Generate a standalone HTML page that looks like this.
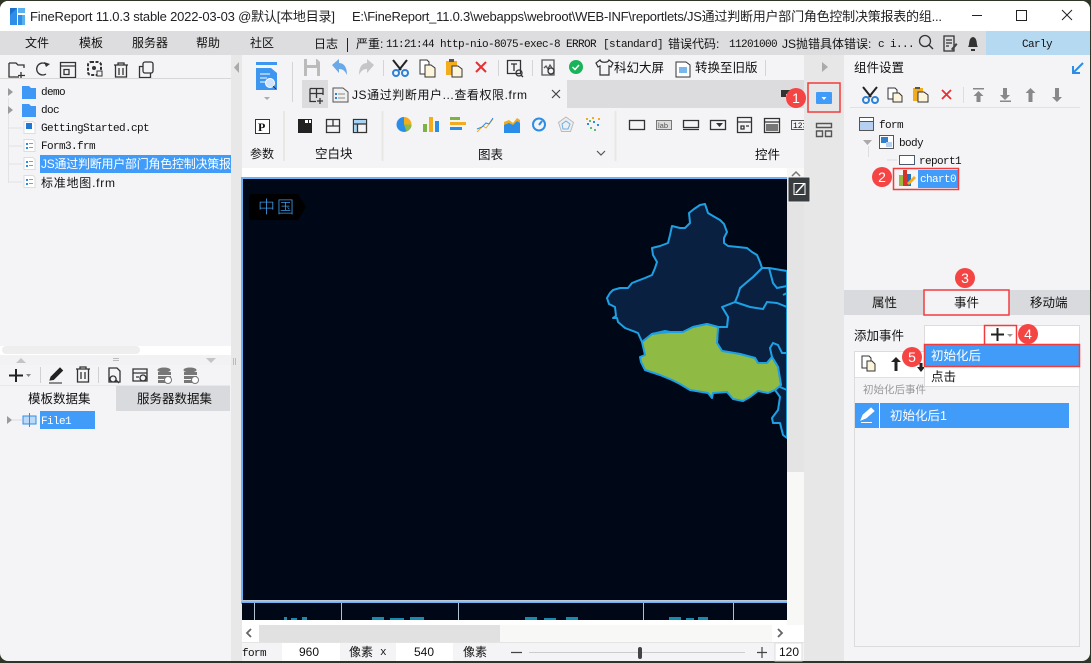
<!DOCTYPE html>
<html lang="zh"><head><meta charset="utf-8"><title>FineReport</title>
<style>
html,body{margin:0;padding:0;width:1091px;height:663px;overflow:hidden;background:#2f3527}
svg{display:block;position:absolute;left:0;top:0}
text{font-family:"Liberation Sans","Noto Sans CJK SC",sans-serif;font-size:12px;fill:#111}
.m{font-family:"Liberation Mono","Noto Sans CJK SC",monospace;font-size:11px;letter-spacing:-.6px;fill:#111}
.t{font-size:13px;fill:#222}
.w{fill:#fff}
.i{fill:none;stroke:#333;stroke-width:1.3}
</style></head><body>
<svg width="1091" height="663" viewBox="0 0 1091 663" xmlns="http://www.w3.org/2000/svg" shape-rendering="auto">
<rect x="0" y="1" width="1090" height="660" rx="8" fill="#f4f4f7"/>
<path d="M0 31V9a8 8 0 0 1 8-8H1082a8 8 0 0 1 8 8V31Z" fill="#fff"/>
<!-- title -->
<path d="M10 8h7v17h-7zM18 15h5v10h-5z" fill="#2d8fe8"/><path d="M18 8h7v5h-7zM22 15h3v10h-3z" fill="#5ab0ee"/><path d="M10 8l7 0-7 7z" fill="#1a70c8"/>
<text x="30" y="21" class="t" textLength="305">FineReport 11.0.3 stable 2022-03-03 @默认[本地目录]</text>
<text x="352" y="21" class="t" textLength="590">E:\FineReport_11.0.3\webapps\webroot\WEB-INF\reportlets/JS通过判断用户部门角色控制决策报表的组...</text>
<path d="M972 15.500h10" stroke="#222" fill="none"/><rect x="1016.500" y="10.500" width="10" height="10" fill="none" stroke="#222"/><path d="M1062 10l10 10M1072 10l-10 10" stroke="#222" fill="none"/>
<!-- menu -->
<rect x="0" y="31" width="986" height="24" fill="#dddddf"/><rect x="986" y="31" width="104" height="24" fill="#b5d9f0"/>
<text x="25" y="47">文件</text><text x="79" y="47">模板</text><text x="132" y="47">服务器</text><text x="196" y="47">帮助</text><text x="250" y="47">社区</text>
<text x="314" y="48">日志</text><path d="M347.500 38v14" stroke="#222"/><text x="356" y="48">严重:</text>
<text x="386" y="47" class="m">11:21:44</text><text x="440" y="47" class="m">http-nio-8075-exec-8</text><text x="566" y="47" class="m">ERROR</text><text x="603" y="47" class="m">[standard]</text>
<text x="668" y="48">错误代码:</text><text x="729" y="47" class="m">11201000</text><text x="782" y="48">JS抛错具体错误:</text><text x="878" y="47" class="m">c i...</text>
<circle cx="925" cy="41" r="5.500" class="i"/><path d="M929 45l4 4" class="i"/>
<path d="M944 36h10v15h-10zM946 40h6M946 43h6M946 46h3" class="i"/><path d="M951 49l5-6 1.500 1.500-5 6z" fill="#444"/>
<path d="M968 47c2-2 0-9 5-10 5 1 3 8 5 10zM971 49h4v2h-4z" fill="#333"/>
<text x="1022" y="47" class="m">Carly</text>
<!-- left panel -->
<path d="M9 63h7l2 2h6v3M9 63v14h10M21 72v7M18 75.500h7" class="i"/>
<path d="M48 63a6 6 0 1 0 0 10" class="i" transform="translate(-2 1)"/><path d="M44 62l6 2-4 3z" fill="#333"/>
<path d="M60.500 62.500h15v15h-15zM60.500 66h15M64 69.500h5v5h-5z" class="i"/>
<rect x="88" y="62" width="13" height="13" rx="3" fill="none" stroke="#333" stroke-width="2" stroke-dasharray="3 1.500"/><circle cx="94" cy="68" r="2" fill="#333"/><rect x="97" y="71" width="5" height="5" fill="#f4f4f7" stroke="#333"/>
<path d="M114 65h14M118 65v-2h6v2M115.500 65v12h11V65M119 68v7M123 68v7" class="i"/>
<path d="M139.500 66.500h11v11h-11z" class="i"/><rect x="143" y="62" width="10" height="11" rx="2" fill="#f4f4f7" stroke="#333" stroke-width="1.300"/>
<path d="M0 78.500h231" stroke="#d6d6d6"/>
<path d="M8.500 98v85M9 128h13M9 146h13M9 164h13M9 182h13" stroke="#e2e2e4" fill="none"/>
<path d="M8 88l5 4-5 4zM8 106l5 4-5 4z" fill="#9a9a9a"/>
<path d="M22 86h7l2 2h5v11H22zM22 104h7l2 2h5v11H22z" fill="#3f98f5"/>
<g fill="#fff" stroke="#ddd"><path d="M24 121.500h9l2 2v10H24zM24 139.500h9l2 2v10H24zM24 157.500h9l2 2v10H24zM24 175.500h9l2 2v10H24z"/></g>
<path d="M26 123h6v6h-6z" fill="#2079d0"/><path d="M26 143h2v2h-2zM26 147h2v2h-2zM26 161h2v2h-2zM26 165h2v2h-2zM26 179h2v2h-2zM26 183h2v2h-2z" fill="#2b8de6"/><path d="M29 143.500h4M29 147.500h4M29 161.500h4M29 165.500h4M29 179.500h4M29 183.500h4" stroke="#999"/>
<text x="41" y="95" class="m">demo</text><text x="41" y="113" class="m">doc</text><text x="41" y="131" class="m">GettingStarted.cpt</text><text x="41" y="149" class="m">Form3.frm</text>
<rect x="40" y="155" width="191" height="18" fill="#409cf8"/>
<text x="41" y="168" class="w" textLength="190">JS通过判断用户部门角色控制决策报</text>
<text x="41" y="187" textLength="74">标准地图.frm</text>
<rect x="0" y="346" width="231" height="9" fill="#fff"/><rect x="2" y="346" width="138" height="8" rx="4" fill="#eeeeee"/>
<rect x="0" y="355" width="231" height="10" fill="#f2f2f4"/><path d="M16 363l5-5 5 5zM206 358h10l-5 5z" fill="#c4c4c4"/><path d="M113 358.500h6M113 360.500h6" stroke="#bbb"/>
<path d="M9 375.500h14M16 369v13" stroke="#222" stroke-width="2"/><path d="M26 374h5l-2.500 3z" fill="#888"/>
<path d="M40.500 367v16M98.500 367v16" stroke="#d0d0d0"/>
<path d="M50 380l1-3 9-9 2.500 2.500-9 9zM49 383h13" stroke="#222" fill="#222"/>
<path d="M76 369h14M80 369v-2h6v2M77.500 369v13h11V369M81 372v7M85 372v7" class="i"/>
<path d="M109 368h8l3 3v11h-11zM113 376a3 3 0 1 0 .1 0M116 380l3 3" class="i"/>
<path d="M133 369h14v12h-14zM133 373h14M136 377h3" class="i"/><circle cx="143" cy="378" r="3" class="i"/>
<g fill="#777"><ellipse cx="164" cy="370" rx="6.500" ry="2.500"/><rect x="158" y="372" width="13" height="3"/><rect x="158" y="376" width="13" height="3"/><rect x="158" y="380" width="10" height="3"/><ellipse cx="190" cy="370" rx="6.500" ry="2.500"/><rect x="184" y="372" width="13" height="3"/><rect x="184" y="376" width="13" height="3"/><rect x="184" y="380" width="10" height="3"/></g>
<circle cx="168" cy="380" r="3.500" fill="#fff" stroke="#777"/><circle cx="195" cy="380" r="3.500" fill="#fff" stroke="#777"/>
<rect x="0" y="385" width="230" height="1" fill="#e8e8e8"/>
<rect x="116" y="386" width="114" height="25" fill="#d9dadd"/>
<text x="28" y="403" style="font-size:12.500px">模板数据集</text><text x="137" y="403" style="font-size:12.500px">服务器数据集</text>
<path d="M7 416l5 4-5 4z" fill="#9a9a9a"/><path d="M12 420h10" stroke="#ddd"/>
<path d="M23 416h13v8H23zM29.500 413v14" fill="#bcd9f8" stroke="#2f8ce8"/><rect x="40" y="411" width="55" height="18" fill="#409cf8"/><text x="41" y="424" class="m w">File1</text>
<!-- vertical divider -->
<rect x="231" y="55" width="11" height="606" fill="#e8e8e8"/><path d="M239 62v11l-5-5.500z" fill="#aaa"/><path d="M233.500 358v7M235.500 358v7" stroke="#bbb"/>
<!-- top toolbar -->
<rect x="242" y="55" width="562" height="113" fill="#f4f4f7"/>
<rect x="256" y="62" width="21" height="3" fill="#3d96f0"/><path d="M256 68h15l6 5v17h-21z" fill="#3d96f0"/><path d="M260 74h10M260 78h7M260 82h6" stroke="#fff"/><circle cx="270" cy="83" r="4.500" fill="#cfe4fa" stroke="#fff"/><path d="M273 86l3 3" stroke="#333"/><path d="M264 97h6l-3 3z" fill="#aaa"/>
<path d="M292.500 62v40M383.500 60v16M498.500 60v16M532.500 60v16M765.500 60v16" stroke="#d4d4d4"/>
<path d="M304 59h13l3 3v14h-16z" fill="#bbb"/><rect x="307" y="59" width="9" height="6" fill="#f4f4f7"/><rect x="307" y="68" width="10" height="8" fill="#f4f4f7"/>
<path d="M332 65l7-6v4c5 0 8 4 8 12-2-4-4-6-8-6v4z" fill="#6aa8e8"/><path d="M374 65l-7-6v4c-5 0-8 4-8 12 2-4 4-6 8-6v4z" fill="#c6c6c6"/>
<g><path d="M393 60l8 10M407 60l-8 10" stroke="#222" stroke-width="2"/><circle cx="396" cy="73" r="3" fill="none" stroke="#2b80d8" stroke-width="2"/><circle cx="405" cy="73" r="3" fill="none" stroke="#2b80d8" stroke-width="2"/></g>
<path d="M420 60h7l2 2v12h-9z" fill="#fff" stroke="#333"/><path d="M425 65h6l4 3v9h-10z" fill="#fdf4dc" stroke="#333"/>
<rect x="446" y="61" width="11" height="14" fill="#f2ac1e"/><rect x="449" y="59" width="5" height="3" fill="#555"/><path d="M452 66h6l4 3v8h-10z" fill="#fdf4dc" stroke="#333"/>
<path d="M476 62l10 10M486 62l-10 10" stroke="#e83030" stroke-width="2"/>
<path d="M507.500 60.500h13v13h-13zM511 64h6M514 64v7" class="i"/><circle cx="519" cy="73" r="3" class="i"/><path d="M521 75l2 2" class="i"/>
<path d="M542 60h12v15h-12zM544 68l2-2 2 3 2-4 2 3" class="i" style="stroke:#555"/><circle cx="551" cy="71" r="3" class="i"/>
<circle cx="576" cy="67" r="7" fill="#19b35a"/><path d="M572.500 67l2.500 2.500 4-4.500" stroke="#fff" stroke-width="1.500" fill="none"/>
<path d="M600 60l-4 3 2 4 2-1v9h9v-9l2 1 2-4-4-3c-1 3-8 3-9 0z" fill="none" stroke="#333" stroke-width="1.200"/>
<text x="614" y="72" style="font-size:12.500px">科幻大屏</text>
<path d="M677 62h9l4 3v12h-14v-15z" fill="#fff" stroke="#333"/><path d="M679 67h8v6h-8z" fill="#7ab6ee"/><text x="695" y="72" style="font-size:12.500px">转换至旧版</text>
<!-- tabs -->
<rect x="302" y="80" width="502" height="28" fill="#dcdcde"/><rect x="328" y="80" width="239" height="28" fill="#f4f4f7"/>
<path d="M310 88.500h13M310 88.500v13h6M316.500 88v10M310 93.500h13M323 88v7M320 98v6M317 101h6" class="i"/>
<path d="M333 88h10l5 4v10h-15z" fill="#f0f0f0" stroke="#555"/><path d="M335 93h2v2h-2zM335 97h2v2h-2z" fill="#2b80d8"/><path d="M338 94h7M338 98h7" stroke="#888"/>
<text x="352" y="99" textLength="175">JS通过判断用户...查看权限.frm</text>
<path d="M552 90l8 8M560 90l-8 8" stroke="#444" stroke-width="1.200"/>
<path d="M781 90h9v4h-4v3h-5z" fill="#333"/>
<!-- component toolbar -->
<path d="M284 111v50M382.500 111v50M615.500 111v50" stroke="#e8e8e2" stroke-width="2"/>
<rect x="255.500" y="119.500" width="14" height="14" fill="#fff" stroke="#333"/><text x="258" y="131" style="font-family:'Liberation Serif';font-weight:bold;font-size:12px">P</text>
<text x="250" y="158">参数</text><text x="315" y="158" style="font-size:12.500px">空白块</text><text x="478" y="159" style="font-size:12.500px">图表</text><text x="755" y="159" style="font-size:12.500px">控件</text>
<path d="M298 119h14v14h-14z" fill="#222"/><path d="M305 120h3v3h-3zM309 120h2v3h-2z" fill="#fff"/>
<path d="M326.500 119.500h13v13h-13zM326.500 126h13M333 119.500v6.500" class="i"/>
<path d="M353.500 119.500h13v13h-13z" class="i"/><path d="M354 120h12v4h-12zM354 124h3v8h-3z" fill="#a8d4f4"/><path d="M353.500 124h13M357.500 124v8" class="i"/>
<path d="M404 117a7.500 7.500 0 1 0 7.500 7.500H404z" fill="#2b8de6"/><path d="M404 117a7.500 7.500 0 0 1 7.500 7.500H404z" fill="#f2ac1e"/><path d="M404 124.500h7.500a7.500 7.500 0 0 1-5 7z" fill="#8dbb45"/>
<rect x="423" y="124" width="4" height="8" fill="#7cb342"/><rect x="429" y="117" width="4" height="15" fill="#f2ac1e"/><rect x="435" y="121" width="4" height="11" fill="#2b8de6"/>
<rect x="450" y="117" width="10" height="3" fill="#7cb342"/><rect x="450" y="122" width="16" height="3" fill="#f2ac1e"/><rect x="450" y="127" width="12" height="3" fill="#2b8de6"/>
<path d="M477 132l6-6 3 2 7-9" stroke="#f2ac1e" fill="none"/><path d="M477 129l5-2 4-4 3 1 4-6" stroke="#2b8de6" fill="none"/>
<path d="M504 122l5-2 4 3 4-5 3 2v7h-16z" fill="#f2ac1e"/><path d="M504 125l5-2 4 2 4-4 3 2v10h-16z" fill="#2b8de6"/>
<circle cx="539" cy="124.500" r="6" fill="none" stroke="#2b8de6" stroke-width="2"/><path d="M539 125l3-4" stroke="#2b8de6" stroke-width="2"/>
<path d="M566 117l7.500 5.500-3 9h-9l-3-9z" fill="#eee" stroke="#bbb"/><path d="M566 121l4 3-2 5h-5l-1-5z" fill="none" stroke="#6ab0e8"/>
<g fill="#2b8de6"><rect x="587" y="123" width="2" height="2"/><rect x="593" y="121" width="2" height="2"/><rect x="597" y="124" width="2" height="2"/></g><g fill="#f2ac1e"><rect x="586" y="118" width="2" height="2"/><rect x="592" y="117" width="2" height="2"/><rect x="598" y="118" width="2" height="2"/></g><g fill="#5ac06a"><rect x="590" y="127" width="2" height="2"/><rect x="594" y="129" width="2" height="2"/><rect x="589" y="120" width="2" height="2"/></g>
<rect x="629.500" y="120.500" width="15" height="9" class="i"/>
<rect x="656.500" y="120.500" width="15" height="9" fill="#ddd" stroke="#777"/><text x="658" y="128" style="font-size:7.500px;fill:#555">lab</text>
<path d="M683.500 120.500h15v7h-15zM683 129.500h16" class="i"/>
<rect x="710.500" y="120.500" width="15" height="9" class="i"/><path d="M716 123h7l-3.500 4z" fill="#333"/>
<path d="M737.500 117.500h14v15h-14zM737.500 122h14M741 126h3v3h-3zM746 126h3" class="i"/>
<path d="M764.500 118.500h15v14h-15zM764.500 122h15" class="i"/><path d="M766 124h12v7h-12z" fill="#333" opacity=".65"/>
<rect x="791.500" y="120.500" width="13" height="9" fill="#f4f4f7" stroke="#555"/><text x="793" y="128" class="m" style="font-size:8px;letter-spacing:0">123</text>
<path d="M597 151l4 4 4-4" stroke="#555" fill="none" stroke-width="1.200"/>
<rect x="242" y="168" width="562" height="10" fill="#fff"/>
<!-- canvas -->
<rect x="241" y="177" width="546" height="427" fill="#6cb2f4"/>
<rect x="243" y="179" width="544" height="421" fill="#000717"/>
<path d="M249 197a3 3 0 0 1 3-3h46l8 13-8 13h-46a3 3 0 0 1-3-3z" fill="#000"/>
<text x="258" y="213" style="font-family:'WenQuanYi Zen Hei','Noto Sans CJK SC',sans-serif;font-size:17px;fill:#3c9be8;letter-spacing:2px;font-weight:200">中国</text>
<!-- map -->
<g stroke="#1ea0e4" stroke-width="2" stroke-linejoin="round" fill="#0a2040">
<path d="M762 268L769 268 787 271V438L783 435 780 423 773 423 772 418 778 410 780 397 775 390 781 385 778 367 772 357 767 363 758 363 755 358 740 354 722 351 717 343 718 327 727 327 728 317 722 307 735 302 740 288 747 282 753 277Z"/>
<path d="M700 205 705 204 708 213 713 216 720 220 724 224 727 232 724 238 724 243 728 246 738 247 747 248 752 252 757 255 760 262 762 268 753 277 747 282 740 288 738 295 735 302 722 307 728 317 727 327 718 327 707 324 693 327 683 332 670 332 665 331 652 334 642 342 638 333 625 328 618 322 617 318 613 318 616 316 615 307 609 304 607 298 610 293 613 290 620 288 628 288 632 283 645 278 652 275 655 268 657 262 653 255 652 248 660 246 668 243 670 235 672 226 680 228 685 228 690 223 689 213 694 209Z"/>
</g>
<path d="M652 334 660 333 670 332 683 332 693 327 707 324 718 327 717 343 722 351 740 354 755 358 758 363 767 363 772 357 778 367 781 385 775 390 768 393 758 391 750 397 743 401 733 399 727 392 713 393 712 398 708 393 690 390 680 384 672 380 660 375 645 370 641 362 640 357 645 355 642 342Z" fill="#8fbb44" stroke="#1ea0e4" stroke-width="2" stroke-linejoin="round"/>
<path d="M769 268 773 283 777 288 787 286M735 302 741 304 750 307 763 309 767 302 777 303 787 307M783 295 787 293M772 357 770 348 773 343 778 345 782 353 787 353M780 387 787 390" stroke="#1ea0e4" stroke-width="2" fill="none"/>
<!-- scrollbar v -->
<rect x="787" y="170" width="17" height="302" fill="#e4e4e4"/><rect x="787" y="472" width="17" height="170" fill="#f8f8f6"/><rect x="787" y="168" width="17" height="9" fill="#f8f8f6"/><path d="M792 176l4-4 4 4" fill="none" stroke="#777" stroke-width="1.500"/>
<path d="M792 630l4 4 4-4" fill="none" stroke="#777" stroke-width="1.500"/>
<!-- canvas bottom strip -->
<rect x="241" y="600" width="546" height="3" fill="#bcc8d4"/><rect x="241" y="601.500" width="546" height="2" fill="#6cb2f4"/>
<rect x="242" y="603" width="545" height="17" fill="#000717"/>
<path d="M254.500 603v17M341.500 603v17M458.500 603v17M643.500 603v17M733.500 603v17" stroke="#b0c0d0"/>
<g fill="#1eb8e0" opacity=".75"><rect x="284" y="617" width="3" height="3"/><rect x="291" y="618" width="6" height="2"/><rect x="302" y="617" width="5" height="3"/><rect x="372" y="617" width="12" height="3"/><rect x="390" y="618" width="14" height="2"/><rect x="410" y="617" width="14" height="3"/><rect x="525" y="617" width="12" height="3"/><rect x="544" y="618" width="12" height="2"/><rect x="566" y="617" width="12" height="3"/><rect x="669" y="617" width="12" height="3"/><rect x="686" y="618" width="8" height="2"/><rect x="698" y="617" width="10" height="3"/></g>
<rect x="242" y="620" width="545" height="5" fill="#fff"/>
<!-- h scrollbar -->
<rect x="242" y="625" width="562" height="17" fill="#f8f8f6"/><rect x="242" y="625" width="17" height="17" fill="#fff"/><rect x="259" y="625" width="241" height="17" fill="#e1e1e1"/><rect x="772" y="625" width="32" height="17" fill="#fff"/>
<path d="M251 629l-4 4 4 4M778 629l4 4-4 4" fill="none" stroke="#666" stroke-width="1.800"/>
<!-- status -->
<rect x="242" y="642" width="562" height="19" fill="#f4f4f7"/><path d="M242 642.500h562" stroke="#e4e4e4"/>
<text x="242" y="656" class="m">form</text>
<rect x="282" y="643" width="58" height="18" fill="#fff"/><rect x="396" y="643" width="57" height="18" fill="#fff"/><rect x="775" y="643" width="27" height="18" fill="#fff" stroke="#ddd"/>
<text x="299" y="656" style="font-size:12px">960</text><text x="349" y="656">像素</text><text x="380" y="655" class="m">x</text><text x="414" y="656" style="font-size:12px">540</text><text x="463" y="656">像素</text>
<path d="M511 652.500h11M757 652.500h10M762 647v11" stroke="#444" stroke-width="1.200"/><path d="M529 652.500h216" stroke="#ccc"/><rect x="638" y="647" width="4" height="12" rx="2" fill="#444"/>
<text x="779" y="656" style="font-size:12px">120</text>
<!-- right col -->
<rect x="804" y="55" width="40" height="606" fill="#e7e7e7"/>
<path d="M822 62l6 5-6 5z" fill="#aaa"/>
<rect x="816" y="92" width="16" height="12" rx="1" fill="#409cf8"/><path d="M821.500 97h5l-2.500 3z" fill="#fff"/>
<path d="M816.500 123.500h15v4h-15zM816.500 131h6v5.500h-6zM825.500 131h6v5.500h-6z" fill="none" stroke="#555" stroke-width="1.400"/>
<rect x="808" y="83" width="32" height="29" fill="none" stroke="#f23c3c" stroke-width="1.500"/>
<!-- edit button above the column -->
<rect x="788" y="177" width="22" height="25" rx="1" fill="#3a3d40" stroke="#eee"/><path d="M794 183.500h11v11h-11z" fill="none" stroke="#fff"/><path d="M796 193l8-9" stroke="#fff" stroke-width="1.500"/>
<!-- right panel -->
<rect x="844" y="55" width="246" height="235" fill="#f4f4f7"/>
<text x="854" y="72" style="font-size:12.500px">组件设置</text>
<path d="M1083 63l-9 9M1073 66v7h7" stroke="#2b8de6" stroke-width="2" fill="none"/>
<g transform="translate(470 27)"><path d="M393 60l8 10M407 60l-8 10" stroke="#222" stroke-width="2"/><circle cx="396" cy="73" r="3" fill="none" stroke="#2b80d8" stroke-width="2"/><circle cx="405" cy="73" r="3" fill="none" stroke="#2b80d8" stroke-width="2"/></g>
<path d="M888 88h7l2 2v9h-9z" fill="#fff" stroke="#333"/><path d="M893 93h6l3 3v6h-9z" fill="#fdf4dc" stroke="#333"/>
<rect x="913" y="88" width="10" height="13" fill="#f2ac1e"/><rect x="915" y="87" width="5" height="2" fill="#555"/><path d="M918 92h6l4 3v7h-10z" fill="#fdf4dc" stroke="#333"/>
<path d="M942 90l9 9M951 90l-9 9" stroke="#e83030" stroke-width="1.800"/><path d="M963.500 87v16" stroke="#ddd"/>
<g fill="#888"><path d="M973 88h11v1.500h-11zM978.500 91l5 5h-3v6h-4v-6h-3zM1011 102h-11v-1.500h11zM1003 88h4v7h3l-5 5-5-5h3zM1030.500 88l5 5h-3v9h-4v-9h-3zM1057 102l-5-5h3v-9h4v9h3z"/></g>
<path d="M850 107.500h230" stroke="#e2e2e2"/>
<rect x="859.500" y="117.500" width="14" height="13" fill="#b5d0f0" stroke="#555"/><path d="M859.500 121.500h14" stroke="#555"/><rect x="860" y="118" width="13" height="3" fill="#fff"/><text x="879" y="128" class="m">form</text>
<path d="M863 140h9l-4.500 5z" fill="#aaa"/><rect x="879.500" y="135.500" width="14" height="13" fill="#fff" stroke="#555"/><rect x="881" y="137" width="7" height="6" fill="#2f80c8"/><rect x="886" y="142" width="6" height="5" fill="#b5d0f0"/><text x="899" y="146" class="m">body</text>
<path d="M868.500 146v11M887 160h10" stroke="#ddd"/>
<rect x="899.500" y="155.500" width="15" height="9" fill="#fff" stroke="#4a5a70"/><text x="919" y="164" class="m">report1</text>
<rect x="899" y="175" width="4" height="11" fill="#9ab840"/><rect x="903" y="170" width="4" height="16" fill="#d8342c"/><rect x="907" y="174" width="4" height="12" fill="#2070b8"/><path d="M907 183l7-7 2 2-7 7z" fill="#f2ac1e"/>
<rect x="918" y="170" width="40" height="18" fill="#409cf8"/><text x="920" y="182" class="m w">chart0</text>
<rect x="893.500" y="168.500" width="65" height="21" fill="none" stroke="#f23c3c" stroke-width="1.500"/>
<!-- tabs -->
<rect x="844" y="290" width="246" height="25" fill="#d9dadd"/><rect x="924" y="290" width="85" height="25" fill="#f4f4f7" stroke="#f23c3c" stroke-width="1.500"/>
<text x="872" y="307" style="font-size:12.500px">属性</text><text x="954" y="307" style="font-size:12.500px">事件</text><text x="1030" y="307" style="font-size:12.500px">移动端</text>
<text x="854" y="340" style="font-size:12.500px">添加事件</text>
<!-- list -->
<rect x="854.500" y="351.500" width="225" height="295" fill="#f4f4f7" stroke="#dcdcdc"/>
<rect x="855" y="352" width="224" height="25" fill="#fff"/><path d="M855 377.500h224" stroke="#e0e0e0"/>
<path d="M862 356h7l2 2v10h-9z" fill="#fff" stroke="#333"/><path d="M867 361h5l3 3v7h-8z" fill="#fdf4dc" stroke="#333"/>
<path d="M896 357l5 5h-3.500v9h-3v-9H891z" fill="#222"/><path d="M921 372l-4-5h2.500v-4h3v4h2.500z" fill="#222"/>
<text x="863" y="393" style="font-size:10.500px;fill:#999">初始化后事件</text>
<rect x="855" y="403" width="214" height="25" fill="#409cf8"/><rect x="879" y="403" width="1" height="25" fill="#fff"/>
<path d="M861 420l2-5 8-7 3 3-8 7zM861 422.500h11" fill="#fff" stroke="#fff"/>
<text x="890" y="420" class="w" style="font-size:12.500px">初始化后1</text>
<!-- combo -->
<rect x="924.500" y="325.500" width="155" height="61" fill="#fff" stroke="#dcdcdc"/>
<path d="M991 334.500h13M997.500 328v13" stroke="#222" stroke-width="2"/><path d="M1007 334h6l-3 3z" fill="#999"/>
<rect x="984.500" y="325.500" width="32" height="19" fill="none" stroke="#f23c3c" stroke-width="1.500"/>
<rect x="925" y="345" width="154" height="21" fill="#409cf8"/>
<text x="931" y="360" class="w" style="font-size:12.500px">初始化后</text><text x="931" y="381" style="font-size:12.500px">点击</text>
<rect x="924.500" y="344.500" width="155" height="22" fill="none" stroke="#f23c3c" stroke-width="1.500"/>
<!-- badges -->
<g fill="#f44444"><circle cx="796" cy="98" r="10"/><circle cx="882" cy="177" r="10"/><circle cx="965" cy="278" r="10"/><circle cx="1028" cy="334" r="10"/><circle cx="912" cy="357" r="10"/></g>
<g><text x="796" y="103" class="w" text-anchor="middle" style="font-size:14px">1</text><text x="882" y="182" class="w" text-anchor="middle" style="font-size:14px">2</text><text x="965" y="283" class="w" text-anchor="middle" style="font-size:14px">3</text><text x="1028" y="339" class="w" text-anchor="middle" style="font-size:14px">4</text><text x="912" y="362" class="w" text-anchor="middle" style="font-size:14px">5</text></g>
</svg>
</body></html>
